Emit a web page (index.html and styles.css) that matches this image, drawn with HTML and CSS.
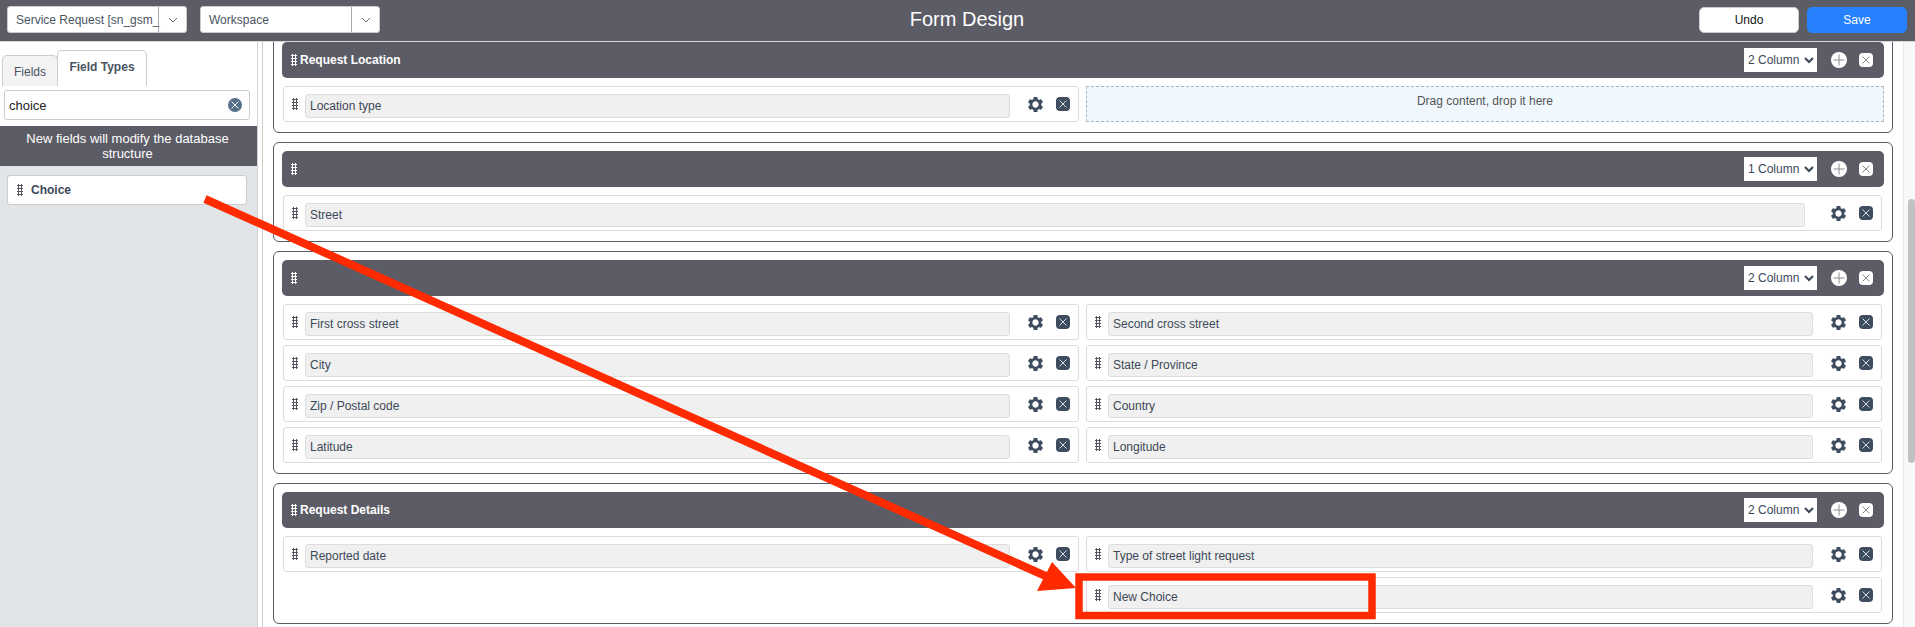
FILE: index.html
```html
<!DOCTYPE html>
<html lang="en">
<head>
    <meta charset="UTF-8">
    <meta name="viewport" content="width=device-width, initial-scale=1.0">
    <title>Form Design</title>
    <link rel="stylesheet" href="styles.css">
</head>
<body>
    <svg class="defs" width="0" height="0">
        <symbol id="gear" viewBox="0 0 24 24">
            <path d="M19.14 12.94c.04-.3.06-.61.06-.94 0-.32-.02-.64-.07-.94l2.03-1.58a.49.49 0 0 0 .12-.61l-1.92-3.32a.488.488 0 0 0-.59-.22l-2.39.96c-.5-.38-1.03-.7-1.62-.94l-.36-2.54a.484.484 0 0 0-.48-.41h-3.84c-.24 0-.43.17-.47.41l-.36 2.54c-.59.24-1.13.57-1.62.94l-2.39-.96c-.22-.08-.47 0-.59.22L2.74 8.87c-.12.21-.08.47.12.61l2.03 1.58c-.05.3-.09.63-.09.94s.02.64.07.94l-2.03 1.58a.49.49 0 0 0-.12.61l1.92 3.32c.12.22.37.29.59.22l2.39-.96c.5.38 1.03.7 1.62.94l.36 2.54c.05.24.24.41.48.41h3.84c.24 0 .44-.17.47-.41l.36-2.54c.59-.24 1.13-.56 1.62-.94l2.39.96c.22.08.47 0 .59-.22l1.92-3.32c.12-.22.07-.47-.12-.61l-2.01-1.58zM12 16c-2.2 0-4-1.8-4-4s1.8-4 4-4 4 1.8 4 4-1.8 4-4 4z"/>
        </symbol>
        <symbol id="cross" viewBox="0 0 14 14">
            <path d="M3.5 3.5l7 7M10.5 3.5l-7 7" fill="none" stroke="currentColor" stroke-width="1"/>
        </symbol>
        <symbol id="plus" viewBox="0 0 16 16">
            <path d="M8 2.5v11M2.5 8h11" fill="none" stroke="currentColor" stroke-width="1"/>
        </symbol>
        <symbol id="chevron" viewBox="0 0 10 6">
            <path d="M1 1l4 4 4-4" fill="none" stroke="currentColor" stroke-width="1"/>
        </symbol>
    </svg>

    <header class="topbar">
        <div class="picker picker-table">
            <span class="picker-text">Service Request [sn_gsm_</span>
            <span class="picker-arrow"><svg class="chevron"><use href="#chevron"/></svg></span>
        </div>
        <div class="picker">
            <span class="picker-text">Workspace</span>
            <span class="picker-arrow"><svg class="chevron"><use href="#chevron"/></svg></span>
        </div>
        <h1 class="title">Form Design</h1>
        <button class="btn btn-undo">Undo</button>
        <button class="btn btn-save">Save</button>
    </header>

    <main class="main">
        <aside class="sidebar">
            <div class="tabs">
                <div class="tab">Fields</div>
                <div class="tab tab-active">Field Types</div>
            </div>
            <div class="search">
                <span>choice</span>
                <span class="search-clear"><svg class="icon-14"><use href="#cross"/></svg></span>
            </div>
            <div class="notice">New fields will modify the database structure</div>
            <div class="palette">
                <div class="palette-item"><span class="handle"></span>Choice</div>
            </div>
        </aside>

        <div class="canvas">
            <section class="section section-first">
                <div class="bar">
                    <span class="handle handle-light"></span>
                    <span class="bar-title">Request Location</span>
                    <select class="columns"><option>2 Column</option></select>
                    <span class="bar-add"><svg class="icon-16"><use href="#plus"/></svg></span>
                    <span class="bar-remove"><svg class="icon-14"><use href="#cross"/></svg></span>
                </div>
                <div class="grid">
                    <div class="row">
                        <span class="handle"></span>
                        <div class="field">Location type</div>
                        <svg class="gear"><use href="#gear"/></svg>
                        <span class="remove"><svg class="icon-14"><use href="#cross"/></svg></span>
                    </div>
                    <div class="dropzone">Drag content, drop it here</div>
                </div>
            </section>

            <section class="section">
                <div class="bar">
                    <span class="handle handle-light"></span>
                    <span class="bar-title"></span>
                    <select class="columns"><option>1 Column</option></select>
                    <span class="bar-add"><svg class="icon-16"><use href="#plus"/></svg></span>
                    <span class="bar-remove"><svg class="icon-14"><use href="#cross"/></svg></span>
                </div>
                <div class="grid grid-one">
                    <div class="row row-wide">
                        <span class="handle"></span>
                        <div class="field">Street</div>
                        <svg class="gear"><use href="#gear"/></svg>
                        <span class="remove"><svg class="icon-14"><use href="#cross"/></svg></span>
                    </div>
                </div>
            </section>

            <section class="section">
                <div class="bar">
                    <span class="handle handle-light"></span>
                    <span class="bar-title"></span>
                    <select class="columns"><option>2 Column</option></select>
                    <span class="bar-add"><svg class="icon-16"><use href="#plus"/></svg></span>
                    <span class="bar-remove"><svg class="icon-14"><use href="#cross"/></svg></span>
                </div>
                <div class="grid">
                    <div class="row"><span class="handle"></span><div class="field">First cross street</div><svg class="gear"><use href="#gear"/></svg><span class="remove"><svg class="icon-14"><use href="#cross"/></svg></span></div>
                    <div class="row"><span class="handle"></span><div class="field">Second cross street</div><svg class="gear"><use href="#gear"/></svg><span class="remove"><svg class="icon-14"><use href="#cross"/></svg></span></div>
                    <div class="row"><span class="handle"></span><div class="field">City</div><svg class="gear"><use href="#gear"/></svg><span class="remove"><svg class="icon-14"><use href="#cross"/></svg></span></div>
                    <div class="row"><span class="handle"></span><div class="field">State / Province</div><svg class="gear"><use href="#gear"/></svg><span class="remove"><svg class="icon-14"><use href="#cross"/></svg></span></div>
                    <div class="row"><span class="handle"></span><div class="field">Zip / Postal code</div><svg class="gear"><use href="#gear"/></svg><span class="remove"><svg class="icon-14"><use href="#cross"/></svg></span></div>
                    <div class="row"><span class="handle"></span><div class="field">Country</div><svg class="gear"><use href="#gear"/></svg><span class="remove"><svg class="icon-14"><use href="#cross"/></svg></span></div>
                    <div class="row"><span class="handle"></span><div class="field">Latitude</div><svg class="gear"><use href="#gear"/></svg><span class="remove"><svg class="icon-14"><use href="#cross"/></svg></span></div>
                    <div class="row"><span class="handle"></span><div class="field">Longitude</div><svg class="gear"><use href="#gear"/></svg><span class="remove"><svg class="icon-14"><use href="#cross"/></svg></span></div>
                </div>
            </section>

            <section class="section">
                <div class="bar">
                    <span class="handle handle-light"></span>
                    <span class="bar-title">Request Details</span>
                    <select class="columns"><option>2 Column</option></select>
                    <span class="bar-add"><svg class="icon-16"><use href="#plus"/></svg></span>
                    <span class="bar-remove"><svg class="icon-14"><use href="#cross"/></svg></span>
                </div>
                <div class="grid">
                    <div class="row"><span class="handle"></span><div class="field">Reported date</div><svg class="gear"><use href="#gear"/></svg><span class="remove"><svg class="icon-14"><use href="#cross"/></svg></span></div>
                    <div class="row"><span class="handle"></span><div class="field">Type of street light request</div><svg class="gear"><use href="#gear"/></svg><span class="remove"><svg class="icon-14"><use href="#cross"/></svg></span></div>
                    <div class="row row-right"><span class="handle"></span><div class="field">New Choice</div><svg class="gear"><use href="#gear"/></svg><span class="remove"><svg class="icon-14"><use href="#cross"/></svg></span></div>
                </div>
            </section>
        </div>

        <div class="scrollbar"><div class="scrollbar-thumb"></div></div>
    </main>

    <!-- red annotation drawn on top of the screenshot -->
    <svg class="markup" viewBox="0 0 1915 627">
        <line x1="205" y1="199" x2="1050" y2="578" stroke="#ff2a00" stroke-width="8"/>
        <polygon points="1052,562 1037,591 1076,588" fill="#ff2a00"/>
        <rect x="1079" y="577" width="293" height="38.5" fill="none" stroke="#ff2a00" stroke-width="7.5"/>
    </svg>
</body>
</html>
```

FILE: styles.css
```css
* {
    box-sizing: border-box;
}

body {
    margin: 0;
    height: 627px;
    overflow: hidden;
    position: relative;
    background: #fff;
    color: #3c4858;
    font-family: "Liberation Sans", Arial, sans-serif;
    font-size: 12px;
}

.defs {
    position: absolute;
}

/* top bar */
.topbar {
    height: 42px;
    display: flex;
    align-items: center;
    padding: 0 8px 2px 7px;
    background-color: #5c5c66;
    border-bottom: 1px solid #d4d4d4;
}

.picker {
    width: 180px;
    height: 27px;
    margin-right: 13px;
    display: flex;
    align-items: center;
    background: #fff;
    border: 1px solid #ccc;
    border-radius: 3px;
    color: #4a5462;
    font-size: 12px;
}

.picker-text {
    flex: 1;
    min-width: 0;
    padding-left: 8px;
    white-space: nowrap;
}

.picker-arrow {
    width: 28px;
    height: 100%;
    display: flex;
    align-items: center;
    justify-content: center;
    border-left: 1px solid #aaa;
}

.chevron {
    width: 10px;
    height: 6px;
    color: #667;
}

.title {
    flex: 1;
    margin: 0;
    padding-right: 158px;
    text-align: center;
    color: #fff;
    font-size: 20px;
    font-weight: normal;
}

.btn {
    width: 100px;
    height: 26px;
    border-radius: 5px;
    font-family: inherit;
    font-size: 12px;
}

.btn-undo {
    margin-right: 8px;
    background: #fff;
    border: 1px solid #ccc;
    color: #111;
}

.btn-save {
    background: #2681ff;
    border: 1px solid #2681ff;
    color: #fff;
}

/* page body */
.main {
    display: flex;
    height: 585px;
    overflow: hidden;
}

.sidebar {
    width: 258px;
    flex-shrink: 0;
    display: flex;
    flex-direction: column;
    border-right: 1px solid #d0d4d8;
}

.tabs {
    height: 44px;
    padding: 8px 0 0 2px;
    display: flex;
    align-items: flex-end;
}

.tab {
    width: 56px;
    height: 31px;
    padding-top: 9px;
    text-align: center;
    background: #f3f3f3;
    border: 1px solid #ccc;
    border-bottom: none;
    border-radius: 5px 5px 0 0;
    color: #4a5462;
}

.tab-active {
    width: 90px;
    height: 36px;
    margin-left: -1px;
    background: #fff;
    font-weight: bold;
}

.search {
    width: 246px;
    height: 30px;
    margin: 4px 0 6px 4px;
    padding: 0 7px 0 4px;
    display: flex;
    align-items: center;
    justify-content: space-between;
    border: 1px solid #ccc;
    border-radius: 3px;
    color: #222;
    font-size: 13px;
}

.search-clear {
    width: 14px;
    height: 14px;
    display: flex;
    border-radius: 50%;
    background: #56708a;
    color: #fff;
}

.notice {
    height: 40px;
    padding: 5px 21px 0 19px;
    background: #5c5c66;
    color: #fff;
    font-size: 13px;
    line-height: 15px;
    text-align: center;
}

.palette {
    flex: 1;
    padding: 9px 10px 0 7px;
    background: #e1e5e8;
}

.palette-item {
    height: 30px;
    display: flex;
    align-items: center;
    background: #fff;
    border: 1px solid #ccc;
    border-radius: 3px;
    padding-left: 9px;
    font-weight: bold;
}

.palette-item .handle {
    margin-right: 8px;
}

/* form canvas */
.canvas {
    flex: 1;
    min-width: 0;
    margin-left: 4px;
    padding: 0 10px;
    border-left: 1px solid #ccc;
}

.section {
    margin-bottom: 9px;
    padding: 8px 8px 10px;
    border: 1px solid #5c5c66;
    border-radius: 6px;
}

.section-first {
    margin-top: -9px;
}

.bar {
    height: 36px;
    display: flex;
    align-items: center;
    padding: 0 9px 0 9px;
    background: #5c5c66;
    border-radius: 5px;
    color: #fff;
}

.bar-title {
    flex: 1;
    margin-left: 3px;
    font-weight: bold;
    font-size: 12px;
}

.columns {
    width: 73px;
    height: 24px;
    border: none;
    border-radius: 0;
    background: #fff;
    color: #3c4858;
    font-family: inherit;
    font-size: 12px;
}

.bar-add {
    width: 16px;
    height: 16px;
    margin: 0 12px 0 14px;
    display: flex;
    border-radius: 50%;
    background: #fff;
    color: #8a8a94;
}

.bar-remove {
    width: 14px;
    height: 14px;
    margin-right: 2px;
    display: flex;
    border-radius: 4px;
    background: #fff;
    color: #8a8a94;
}

.icon-14 {
    width: 14px;
    height: 14px;
}

.icon-16 {
    width: 16px;
    height: 16px;
}

.handle {
    width: 6px;
    height: 12px;
    flex-shrink: 0;
    background-image: radial-gradient(circle, #55555f 1px, transparent 1.1px);
    background-size: 3px 3px;
}

.handle-light {
    background-image: radial-gradient(circle, #fff 1px, transparent 1.1px);
}

.grid {
    margin: 8px 1px 0 1px;
    display: grid;
    grid-template-columns: 796px 796px;
    column-gap: 7px;
    row-gap: 5px;
}

.grid-one {
    grid-template-columns: 1599px;
}

.row {
    height: 36px;
    display: flex;
    align-items: center;
    padding-left: 8px;
    border: 1px solid #ddd;
    border-radius: 3px;
}

.row-right {
    grid-column: 2;
}

.field {
    flex: 1;
    height: 24px;
    margin: 4px 0 0 7px;
    padding: 4px 0 0 4px;
    background: #f0f0f0;
    border: 1px solid #ddd;
    border-radius: 3px;
    color: #3c4858;
}

.gear {
    width: 19px;
    height: 19px;
    margin-left: 16px;
    fill: #3e4c5f;
}

.remove {
    width: 14px;
    height: 14px;
    margin: 0 8px 0 11px;
    display: flex;
    border-radius: 4px;
    background: #3e4c5f;
    color: #d8dce0;
}

.row-wide .gear {
    margin-left: 24px;
}

.dropzone {
    height: 36px;
    margin-right: -2px;
    padding-top: 7px;
    background: #f0f8fe;
    border: 1px dashed #a8b4bc;
    text-align: center;
    color: #555;
}

/* fake scrollbar, the page is a fixed size */
.scrollbar {
    width: 12px;
    flex-shrink: 0;
    padding-left: 4px;
    background: #f8f8f8;
    border-left: 1px solid #e8e8e8;
}

.scrollbar-thumb {
    height: 264px;
    margin-top: 157px;
    background: #c1c1c1;
    border-radius: 4px;
}

.markup {
    position: absolute;
    top: 0;
    left: 0;
    width: 1915px;
    height: 627px;
    pointer-events: none;
}
```
